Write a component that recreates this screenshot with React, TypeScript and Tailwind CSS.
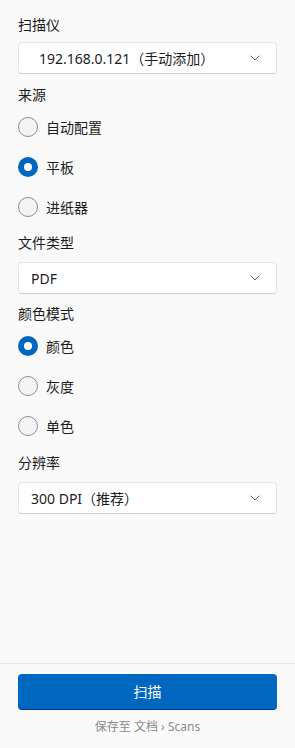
import { useState } from 'react'

const FONT = { fontFamily: '"Noto Sans", "Noto Sans CJK SC", sans-serif' }

function Chevron() {
  return (
    <svg width="10" height="6" viewBox="0 0 10 6" fill="none" className="shrink-0">
      <path d="M1 1l4 4 4-4" stroke="#5f5f5f" strokeWidth="1" strokeLinecap="round" strokeLinejoin="round" />
    </svg>
  )
}

function Select({ value, indent = false }: { value: string; indent?: boolean }) {
  return (
    <button
      type="button"
      className={`flex h-8 w-full items-center justify-between rounded-[4px] border border-[#e5e5e5] border-b-[#d0d0d0] bg-white pr-4 text-[14px] text-[#1b1b1b] ${
        indent ? 'pl-5' : 'pl-3'
      }`}
    >
      <span>{value}</span>
      <Chevron />
    </button>
  )
}

function Radio({ label, checked, onClick }: { label: string; checked: boolean; onClick: () => void }) {
  return (
    <button type="button" onClick={onClick} className="flex h-10 items-center gap-2 text-[14px] text-[#1b1b1b]">
      {checked ? (
        <span className="flex h-5 w-5 items-center justify-center rounded-full bg-[#0067c0]">
          <span className="h-2 w-2 rounded-full bg-white" />
        </span>
      ) : (
        <span className="h-5 w-5 rounded-full border border-[#8d8d8d] bg-[#f3f3f3]" />
      )}
      <span>{label}</span>
    </button>
  )
}

export default function App() {
  const [source, setSource] = useState('平板')
  const [color, setColor] = useState('颜色')

  return (
    <div className="flex h-[748px] w-[295px] flex-col bg-[#f9f9f9]" style={FONT}>
      <div className="flex-1 overflow-auto px-[18px] pt-[15px]">
        <p className="text-[14px] leading-5 text-[#1b1b1b]">扫描仪</p>
        <div className="mt-[7px]">
          <Select value="192.168.0.121（手动添加）" indent />
        </div>

        <p className="mt-[11px] text-[14px] leading-5 text-[#1b1b1b]">来源</p>
        <div className="mt-[2px] flex flex-col">
          {['自动配置', '平板', '进纸器'].map((s) => (
            <Radio key={s} label={s} checked={source === s} onClick={() => setSource(s)} />
          ))}
        </div>

        <p className="mt-[6px] text-[14px] leading-5 text-[#1b1b1b]">文件类型</p>
        <div className="mt-[9px]">
          <Select value="PDF" />
        </div>

        <p className="mt-[10px] text-[14px] leading-5 text-[#1b1b1b]">颜色模式</p>
        <div className="mt-[2px] flex flex-col">
          {['颜色', '灰度', '单色'].map((s) => (
            <Radio key={s} label={s} checked={color === s} onClick={() => setColor(s)} />
          ))}
        </div>

        <p className="mt-[7px] text-[14px] leading-5 text-[#1b1b1b]">分辨率</p>
        <div className="mt-[9px]">
          <Select value="300 DPI（推荐）" />
        </div>
      </div>

      <div className="shrink-0 border-t border-[#e5e5e5] px-[18px] pt-[10px] pb-[13px]">
        <button
          type="button"
          className="flex h-9 w-full items-center justify-center rounded-[4px] border-b border-[#003e92] bg-[#0067c0] text-[14px] text-white"
        >
          扫描
        </button>
        <p className="mt-[9px] text-center text-[12px] leading-4 text-[#8a8a8a]">保存至 文档 › Scans</p>
      </div>
    </div>
  )
}
